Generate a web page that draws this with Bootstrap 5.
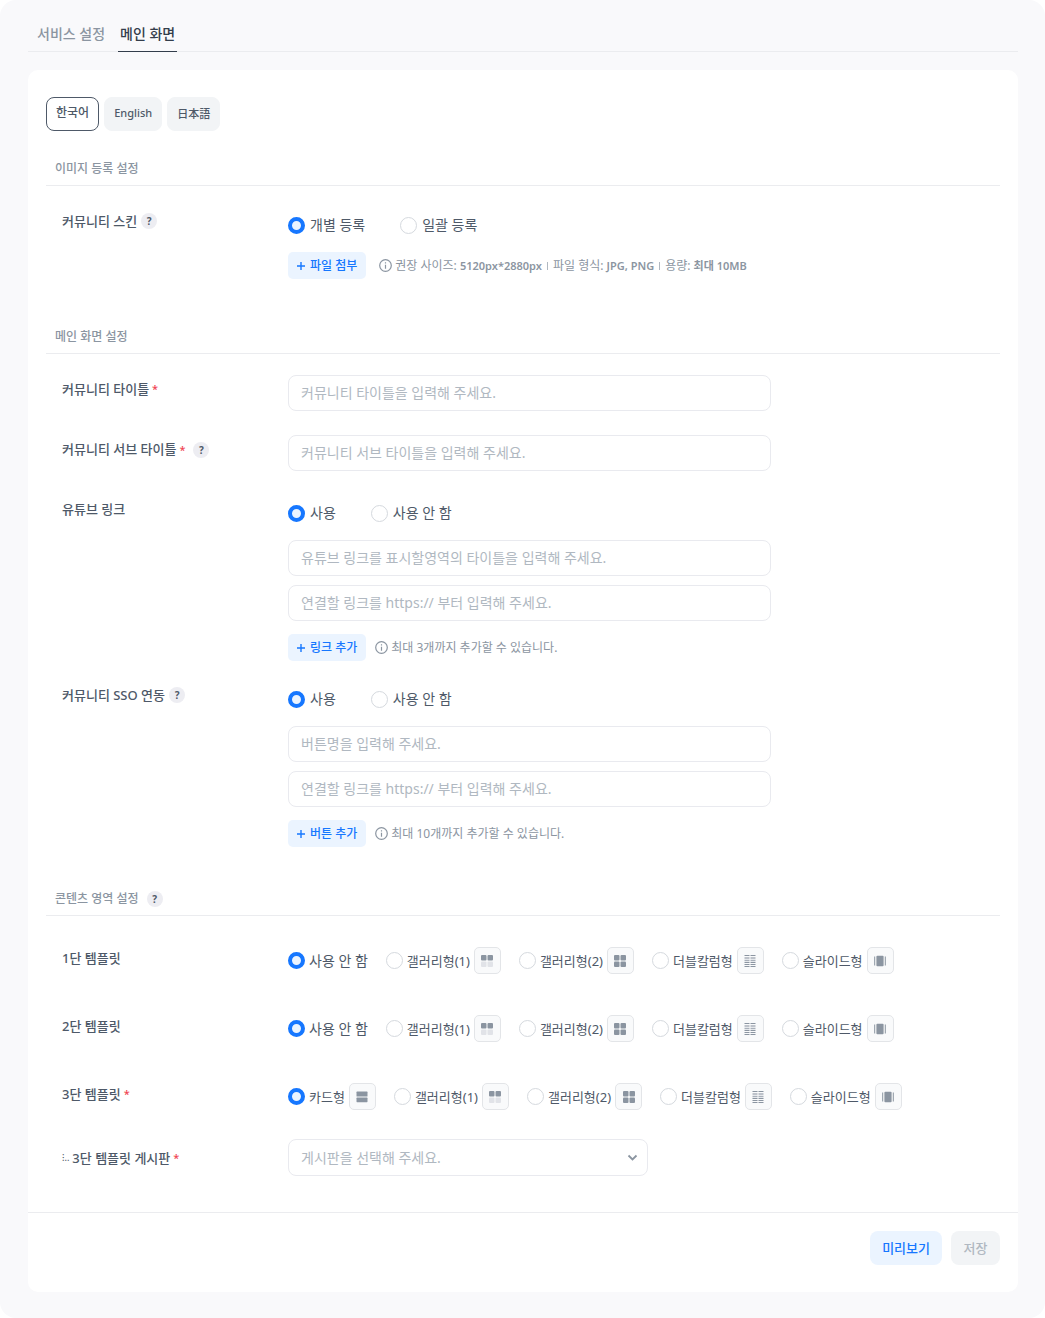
<!DOCTYPE html>
<html lang="ko">
<head>
<meta charset="utf-8">
<meta name="viewport" content="width=device-width, initial-scale=1">
<title>메인 화면</title>
<link href="https://cdn.jsdelivr.net/npm/bootstrap@5.3.0/dist/css/bootstrap.min.css" rel="stylesheet">
<style>
:root{--ink:#4e5968;--soft:#8b95a1;--faint:#b0b8c1;--line:#ebecef;--blue:#1677ff;--tint:#ebf4ff}
body{font-family:"Noto Sans","Noto Sans CJK KR","Noto Sans CJK JP",sans-serif;font-size:14px;line-height:20px;color:var(--ink);background:#fff}
.shell{background:#f9f9fb;border-radius:16px;padding:22px 27px 26px 28px}
.tabs{border-bottom:1px solid var(--line);padding-left:7px;gap:11px;margin-bottom:18px}
.tabs .nav-link{padding:0 2px 5px;line-height:24px;color:var(--soft);font-weight:500;border-bottom:1px solid transparent;margin-bottom:-1px}
.tabs .nav-link.active{color:#333d4b;border-color:#333d4b}
.panel{background:#fff;border-radius:10px}
.panel-body{padding:27px 18px 36px}
.langs{gap:5px}
.lang{height:34px;padding:0 9px 2px;border:1px solid #f2f4f6;background:#f2f4f6;border-radius:8px;font-size:12px;font-weight:500;color:var(--ink);line-height:20px}
.lang:lang(ja),.lang:lang(en){font-size:11px}
.lang:lang(ja){font-family:"Noto Sans CJK JP",sans-serif}
.lang.on{background:#fff;border-color:var(--ink)}
.sec-title{font-size:12px;font-weight:500;color:var(--soft);line-height:20px;padding:7px 9px 6px;border-bottom:1px solid var(--line);margin:0 0 21px;display:flex;align-items:center}
.sec-title.first{margin-top:21px}
.sec-title.second{margin-top:41px}
.sec-title.third{margin-top:35px;margin-bottom:31px}
.line{display:flex;padding-left:16px;margin-bottom:24px}
.line-tight{margin-bottom:20px}
.line-tpl{margin-bottom:41px}
.line-last{margin-bottom:29px}
.line:last-child{margin-bottom:0}
.name{flex:0 0 226px;font-size:13px;font-weight:500;line-height:20px;padding-top:4px;display:flex;align-items:center;align-self:flex-start}
.line-tpl .name,.line-last .name{padding-top:1px}
.line-pick .name{padding-top:0;align-self:center}
.req{color:#f04452;font-size:11px;margin-left:3px}
.q{width:16px;height:16px;border:0;border-radius:50%;background:#ededf2;color:var(--ink);font-size:10px;font-weight:700;line-height:16px;padding:0;text-align:center;margin-left:4px;flex:none}
.q.far{margin-left:8px}
.cell{flex:1 1 auto;min-width:0}
.opts{display:flex;gap:35px;padding-top:6px;margin-bottom:15px}
.opts label{display:flex;align-items:center;gap:5px;line-height:24px}
.tpl{display:flex;flex-wrap:wrap;gap:18px}
.tpl label{display:flex;align-items:center;gap:4px;height:27px}
.tpl .pic{font-size:13px}
.form-check-input.dot{width:17px;height:17px;margin:0;border:1px solid #d5d9de;float:none;flex:none}
.form-check-input.dot:checked{background:var(--tint);border:4px solid var(--blue)}
.box{max-width:483px;height:36px;border:1px solid #e9eaef;border-radius:8px;padding:0 12px 2px;font-size:14px;color:var(--ink)}
.box::placeholder{color:var(--faint);opacity:1}
.box + .box{margin-top:9px}
.pick{height:37px;color:var(--faint);background:none;padding-bottom:0}
.pick-wrap{position:relative;max-width:360px}
.pick-wrap svg{position:absolute;right:10px;top:13px;pointer-events:none}
.acts{display:flex;align-items:center}
.box + .acts{margin-top:13px}
.add{display:flex;align-items:center;gap:5px;height:27px;padding:0 9px;border:0;border-radius:5px;background:var(--tint);color:var(--blue);font-size:12px;font-weight:500}
.tip{display:flex;align-items:center;gap:3px;margin-left:9px;font-size:12px;color:var(--soft)}
.tip.wide{margin-left:13px}
.tip b{font-size:11px;font-weight:600}
.bar{width:1px;height:8px;background:var(--faint);margin:0 2px}
.glyph{width:27px;height:27px;border:1px solid #e3e5e8;border-radius:5px;background:#f9fafb;display:flex;align-items:center;justify-content:center}
.foot{border-top:1px solid var(--line);padding:18px 18px 27px;display:flex;justify-content:flex-end;gap:9px}
.foot button{height:34px;border:0;border-radius:8px;padding:0 12px;font-size:13px;font-weight:500}
.see{background:var(--tint);color:var(--blue)}
.foot .save{background:#f2f4f6;color:var(--faint);min-width:49px}
.mini{font-size:9px;margin-right:3px}
</style>
</head>
<body>
<svg width="0" height="0" class="d-none" aria-hidden="true">
<symbol id="plus" viewBox="0 0 8 8"><path d="M4 0v8M0 4h8" stroke="currentColor" stroke-width="1.4"/></symbol>
<symbol id="info" viewBox="0 0 13 13"><circle cx="6.5" cy="6.5" r="5.8" fill="none" stroke="currentColor" stroke-width="1.2"/><path d="M6.5 5.7v4M6.5 3.2v1.4" stroke="currentColor" stroke-width="1.2"/></symbol>
<symbol id="g1" viewBox="0 0 12 12"><g fill="#8b95a1"><rect width="5.5" height="5.5" rx="1"/><rect x="6.5" width="5.5" height="5.5" rx="1"/></g><g fill="#e1e3e8"><rect y="6.5" width="5.5" height="5.5" rx="1"/><rect x="6.5" y="6.5" width="5.5" height="5.5" rx="1"/></g></symbol>
<symbol id="g2" viewBox="0 0 12 12"><g fill="#8b95a1"><rect width="5.5" height="5.5" rx="1"/><rect x="6.5" width="5.5" height="5.5" rx="1"/><rect y="6.5" width="5.5" height="5.5" rx="1"/><rect x="6.5" y="6.5" width="5.5" height="5.5" rx="1"/></g></symbol>
<symbol id="g3" viewBox="0 0 12 12"><path d="M.5.5h5M6.5.5h5M.5 7.5h5M6.5 7.5h5M.5 9.5h5M6.5 9.5h5M.5 11.5h5M6.5 11.5h5" stroke="#8b95a1"/><path d="M.5 3h5M6.5 3h5M.5 5.5h5M6.5 5.5h5" stroke="#a9b0ba" stroke-width="1.7"/></symbol>
<symbol id="g4" viewBox="0 0 12 12"><rect x="2.4" y=".8" width="7.2" height="10.4" rx="1" fill="#8b95a1"/><path d="M.7 1.5v9M11.3 1.5v9" stroke="#8b95a1" stroke-width="1"/></symbol>
<symbol id="g5" viewBox="0 0 12 12"><g fill="#8b95a1"><rect x=".5" y=".6" width="11" height="5" rx=".6"/><rect x=".5" y="6.6" width="11" height="4.6" rx=".6"/></g></symbol>
</svg>
<div class="shell">
  <nav class="nav tabs">
    <a class="nav-link" href="#">서비스 설정</a>
    <a class="nav-link active" href="#" aria-current="page">메인 화면</a>
  </nav>
  <main class="panel">
    <div class="panel-body">
      <div class="d-flex langs">
        <button type="button" class="lang on">한국어</button>
        <button type="button" class="lang" lang="en">English</button>
        <button type="button" class="lang" lang="ja">日本語</button>
      </div>

      <h2 class="sec-title first">이미지 등록 설정</h2>
      <div class="line mb-0">
        <div class="name">커뮤니티 스킨<button type="button" class="q">?</button></div>
        <div class="cell">
          <div class="opts">
            <label><input class="form-check-input dot" type="radio" name="skin" checked>개별 등록</label>
            <label><input class="form-check-input dot" type="radio" name="skin">일괄 등록</label>
          </div>
          <div class="acts">
            <button type="button" class="add"><svg width="8" height="8"><use href="#plus"/></svg>파일 첨부</button>
            <div class="tip wide"><svg width="13" height="13"><use href="#info"/></svg><span>권장 사이즈: <b>5120px*2880px</b></span><span class="bar"></span><span>파일 형식: <b>JPG, PNG</b></span><span class="bar"></span><span>용량: <b>최대 10MB</b></span></div>
          </div>
        </div>
      </div>

      <h2 class="sec-title second">메인 화면 설정</h2>
      <div class="line">
        <label class="name" for="title">커뮤니티 타이틀<span class="req">*</span></label>
        <div class="cell"><input id="title" class="form-control box" type="text" placeholder="커뮤니티 타이틀을 입력해 주세요."></div>
      </div>
      <div class="line">
        <div class="name"><label for="sub">커뮤니티 서브 타이틀<span class="req">*</span></label><button type="button" class="q far">?</button></div>
        <div class="cell"><input id="sub" class="form-control box" type="text" placeholder="커뮤니티 서브 타이틀을 입력해 주세요."></div>
      </div>
      <div class="line line-tight">
        <div class="name">유튜브 링크</div>
        <div class="cell">
          <div class="opts">
            <label><input class="form-check-input dot" type="radio" name="yt" checked>사용</label>
            <label><input class="form-check-input dot" type="radio" name="yt">사용 안 함</label>
          </div>
          <input class="form-control box" type="text" aria-label="유튜브 타이틀" placeholder="유튜브 링크를 표시할영역의 타이틀을 입력해 주세요.">
          <input class="form-control box" type="text" aria-label="유튜브 링크" placeholder="연결할 링크를 https:// 부터 입력해 주세요.">
          <div class="acts">
            <button type="button" class="add"><svg width="8" height="8"><use href="#plus"/></svg>링크 추가</button>
            <div class="tip"><svg width="13" height="13"><use href="#info"/></svg>최대 3개까지 추가할 수 있습니다.</div>
          </div>
        </div>
      </div>
      <div class="line mb-0">
        <div class="name">커뮤니티 SSO 연동<button type="button" class="q">?</button></div>
        <div class="cell">
          <div class="opts">
            <label><input class="form-check-input dot" type="radio" name="sso" checked>사용</label>
            <label><input class="form-check-input dot" type="radio" name="sso">사용 안 함</label>
          </div>
          <input class="form-control box" type="text" aria-label="버튼명" placeholder="버튼명을 입력해 주세요.">
          <input class="form-control box" type="text" aria-label="버튼 링크" placeholder="연결할 링크를 https:// 부터 입력해 주세요.">
          <div class="acts">
            <button type="button" class="add"><svg width="8" height="8"><use href="#plus"/></svg>버튼 추가</button>
            <div class="tip"><svg width="13" height="13"><use href="#info"/></svg>최대 10개까지 추가할 수 있습니다.</div>
          </div>
        </div>
      </div>

      <h2 class="sec-title third">콘텐츠 영역 설정<button type="button" class="q far">?</button></h2>
      <div class="line line-tpl">
        <div class="name">1단 템플릿</div>
        <div class="cell tpl">
          <label><input class="form-check-input dot" type="radio" name="t1" checked>사용 안 함</label>
          <label class="pic"><input class="form-check-input dot" type="radio" name="t1">갤러리형(1)<span class="glyph"><svg width="12" height="12"><use href="#g1"/></svg></span></label>
          <label class="pic"><input class="form-check-input dot" type="radio" name="t1">갤러리형(2)<span class="glyph"><svg width="12" height="12"><use href="#g2"/></svg></span></label>
          <label class="pic"><input class="form-check-input dot" type="radio" name="t1">더블칼럼형<span class="glyph"><svg width="12" height="12"><use href="#g3"/></svg></span></label>
          <label class="pic"><input class="form-check-input dot" type="radio" name="t1">슬라이드형<span class="glyph"><svg width="12" height="12"><use href="#g4"/></svg></span></label>
        </div>
      </div>
      <div class="line line-tpl">
        <div class="name">2단 템플릿</div>
        <div class="cell tpl">
          <label><input class="form-check-input dot" type="radio" name="t2" checked>사용 안 함</label>
          <label class="pic"><input class="form-check-input dot" type="radio" name="t2">갤러리형(1)<span class="glyph"><svg width="12" height="12"><use href="#g1"/></svg></span></label>
          <label class="pic"><input class="form-check-input dot" type="radio" name="t2">갤러리형(2)<span class="glyph"><svg width="12" height="12"><use href="#g2"/></svg></span></label>
          <label class="pic"><input class="form-check-input dot" type="radio" name="t2">더블칼럼형<span class="glyph"><svg width="12" height="12"><use href="#g3"/></svg></span></label>
          <label class="pic"><input class="form-check-input dot" type="radio" name="t2">슬라이드형<span class="glyph"><svg width="12" height="12"><use href="#g4"/></svg></span></label>
        </div>
      </div>
      <div class="line line-last">
        <div class="name">3단 템플릿<span class="req">*</span></div>
        <div class="cell tpl">
          <label class="pic"><input class="form-check-input dot" type="radio" name="t3" checked>카드형<span class="glyph"><svg width="12" height="12"><use href="#g5"/></svg></span></label>
          <label class="pic"><input class="form-check-input dot" type="radio" name="t3">갤러리형(1)<span class="glyph"><svg width="12" height="12"><use href="#g1"/></svg></span></label>
          <label class="pic"><input class="form-check-input dot" type="radio" name="t3">갤러리형(2)<span class="glyph"><svg width="12" height="12"><use href="#g2"/></svg></span></label>
          <label class="pic"><input class="form-check-input dot" type="radio" name="t3">더블칼럼형<span class="glyph"><svg width="12" height="12"><use href="#g3"/></svg></span></label>
          <label class="pic"><input class="form-check-input dot" type="radio" name="t3">슬라이드형<span class="glyph"><svg width="12" height="12"><use href="#g4"/></svg></span></label>
        </div>
      </div>
      <div class="line line-pick">
        <label class="name" for="board"><span class="mini">⁝..</span>3단 템플릿 게시판<span class="req">*</span></label>
        <div class="cell">
          <div class="pick-wrap">
            <select id="board" class="form-select box pick"><option>게시판을 선택해 주세요.</option></select>
            <svg width="11" height="11" viewBox="0 0 11 11"><path d="M1.5 3.5l4 4 4-4" fill="none" stroke="#8b95a1" stroke-width="1.8"/></svg>
          </div>
        </div>
      </div>
    </div>
    <div class="foot">
      <button type="button" class="see">미리보기</button>
      <button type="button" class="save" disabled>저장</button>
    </div>
  </main>
</div>
<script src="https://cdn.jsdelivr.net/npm/bootstrap@5.3.0/dist/js/bootstrap.bundle.min.js"></script>
</body>
</html>
